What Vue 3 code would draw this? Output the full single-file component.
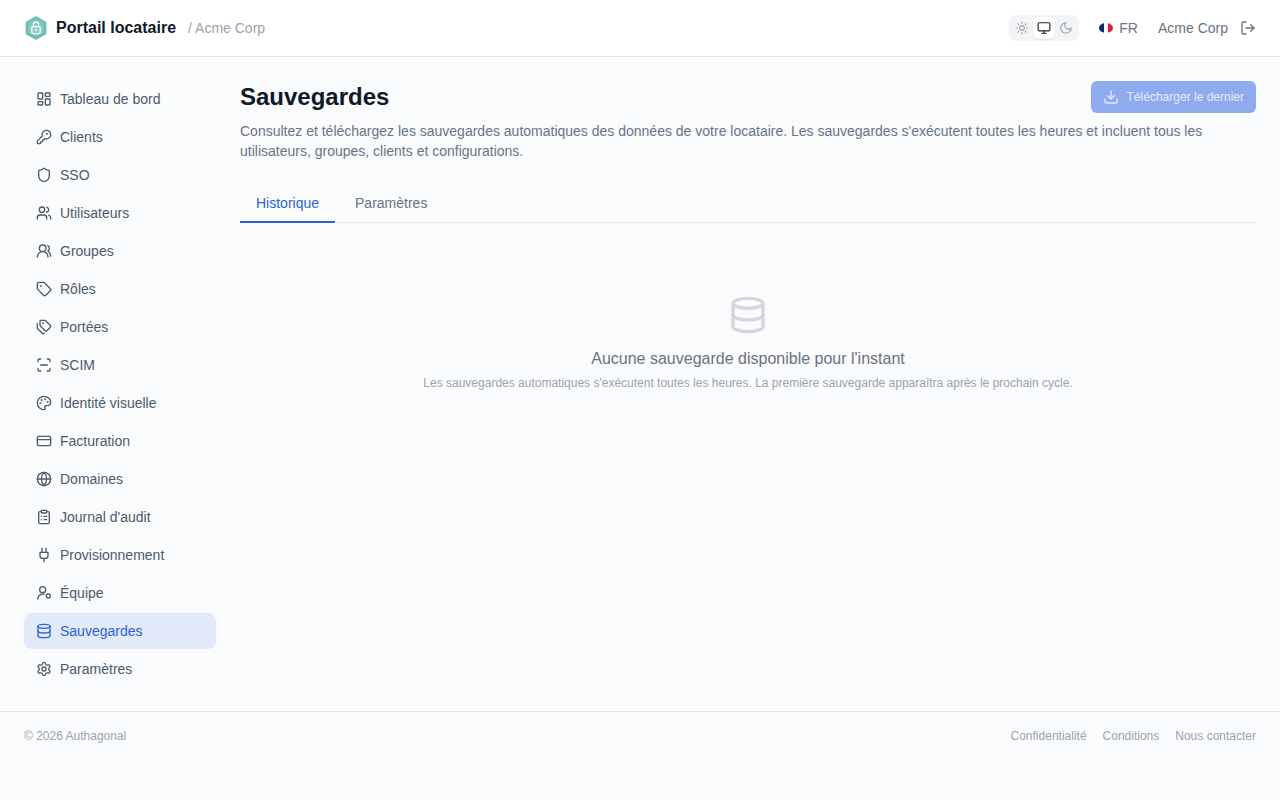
<script setup>
const paths = {
  dashboard: '<rect x="3" y="3" width="7" height="9" rx="1"/><rect x="14" y="3" width="7" height="5" rx="1"/><rect x="14" y="12" width="7" height="9" rx="1"/><rect x="3" y="16" width="7" height="5" rx="1"/>',
  key: '<path d="M2.586 17.414A2 2 0 0 0 2 18.828V21a1 1 0 0 0 1 1h3a1 1 0 0 0 1-1v-1a1 1 0 0 1 1-1h1a1 1 0 0 0 1-1v-1a1 1 0 0 1 1-1h.172a2 2 0 0 0 1.414-.586l.814-.814a6.5 6.5 0 1 0-4-4z"/><circle cx="16.5" cy="7.5" r=".5" fill="currentColor"/>',
  shield: '<path d="M20 13c0 5-3.5 7.5-7.66 8.95a1 1 0 0 1-.67-.01C7.5 20.5 4 18 4 13V6a1 1 0 0 1 1-1c2 0 4.5-1.2 6.24-2.72a1.17 1.17 0 0 1 1.52 0C14.51 3.81 17 5 19 5a1 1 0 0 1 1 1z"/>',
  users: '<path d="M16 21v-2a4 4 0 0 0-4-4H6a4 4 0 0 0-4 4v2"/><circle cx="9" cy="7" r="4"/><path d="M22 21v-2a4 4 0 0 0-3-3.87"/><path d="M16 3.13a4 4 0 0 1 0 7.75"/>',
  usersRound: '<path d="M18 21a8 8 0 0 0-16 0"/><circle cx="10" cy="8" r="5"/><path d="M22 20c0-3.37-2-6.5-4-8a5 5 0 0 0-.45-8.3"/>',
  tag: '<path d="M12.586 2.586A2 2 0 0 0 11.172 2H4a2 2 0 0 0-2 2v7.172a2 2 0 0 0 .586 1.414l8.704 8.704a2.426 2.426 0 0 0 3.42 0l6.58-6.58a2.426 2.426 0 0 0 0-3.42z"/><circle cx="7.5" cy="7.5" r=".5" fill="currentColor"/>',
  tags: '<path d="M13.172 2a2 2 0 0 1 1.414.586l6.71 6.71a2.4 2.4 0 0 1 0 3.408l-4.592 4.592a2.4 2.4 0 0 1-3.408 0l-6.71-6.71A2 2 0 0 1 6 9.172V3a1 1 0 0 1 1-1z"/><path d="M2 7v6.172a2 2 0 0 0 .586 1.414l6.71 6.71a2.4 2.4 0 0 0 3.19.19"/><circle cx="10.5" cy="6.5" r=".5" fill="currentColor"/>',
  scan: '<path d="M3 7V5a2 2 0 0 1 2-2h2"/><path d="M17 3h2a2 2 0 0 1 2 2v2"/><path d="M21 17v2a2 2 0 0 1-2 2h-2"/><path d="M7 21H5a2 2 0 0 1-2-2v-2"/><path d="M7 12h10"/>',
  palette: '<path d="M12 22a1 1 0 0 1 0-20 10 9 0 0 1 10 9 5 5 0 0 1-5 5h-2.25a1.75 1.75 0 0 0-1.4 2.8l.3.4a1.75 1.75 0 0 1-1.4 2.8z"/><circle cx="13.5" cy="6.5" r=".5" fill="currentColor"/><circle cx="17.5" cy="10.5" r=".5" fill="currentColor"/><circle cx="6.5" cy="12.5" r=".5" fill="currentColor"/><circle cx="8.5" cy="7.5" r=".5" fill="currentColor"/>',
  card: '<rect x="2" y="5" width="20" height="14" rx="2"/><line x1="2" y1="10" x2="22" y2="10"/>',
  globe: '<circle cx="12" cy="12" r="10"/><path d="M12 2a14.5 14.5 0 0 0 0 20 14.5 14.5 0 0 0 0-20"/><path d="M2 12h20"/>',
  clipboard: '<rect x="8" y="2" width="8" height="4" rx="1"/><path d="M16 4h2a2 2 0 0 1 2 2v14a2 2 0 0 1-2 2H6a2 2 0 0 1-2-2V6a2 2 0 0 1 2-2h2"/><path d="M12 11h4"/><path d="M12 16h4"/><path d="M8 11h.01"/><path d="M8 16h.01"/>',
  plug: '<path d="M12 22v-5"/><path d="M9 8V2"/><path d="M15 8V2"/><path d="M18 8v5a4 4 0 0 1-4 4h-4a4 4 0 0 1-4-4V8Z"/>',
  userCog: '<circle cx="10" cy="7" r="4.5"/><path d="M2.5 21a7.8 7.8 0 0 1 9.5-7.2"/><circle cx="18.5" cy="16.5" r="3"/>',
  database: '<ellipse cx="12" cy="5" rx="9" ry="3"/><path d="M3 5V19A9 3 0 0 0 21 19V5"/><path d="M3 12A9 3 0 0 0 21 12"/>',
  settings: '<path d="M9.671 4.136a2.34 2.34 0 0 1 4.659 0 2.34 2.34 0 0 0 3.319 1.915 2.34 2.34 0 0 1 2.33 4.033 2.34 2.34 0 0 0 0 3.831 2.34 2.34 0 0 1-2.33 4.033 2.34 2.34 0 0 0-3.319 1.915 2.34 2.34 0 0 1-4.659 0 2.34 2.34 0 0 0-3.32-1.915 2.34 2.34 0 0 1-2.33-4.033 2.34 2.34 0 0 0 0-3.831A2.34 2.34 0 0 1 6.35 6.051a2.34 2.34 0 0 0 3.319-1.915"/><circle cx="12" cy="12" r="3"/>',
  sun: '<circle cx="12" cy="12" r="4"/><path d="M12 2v2"/><path d="M12 20v2"/><path d="m4.93 4.93 1.41 1.41"/><path d="m17.66 17.66 1.41 1.41"/><path d="M2 12h2"/><path d="M20 12h2"/><path d="m6.34 17.66-1.41 1.41"/><path d="m19.07 4.93-1.41 1.41"/>',
  monitor: '<rect x="2" y="3" width="20" height="14" rx="2"/><path d="M8 21h8"/><path d="M12 17v4"/>',
  moon: '<path d="M12 3a6 6 0 0 0 9 9 9 9 0 1 1-9-9Z"/>',
  logout: '<path d="m16 17 5-5-5-5"/><path d="M21 12H9"/><path d="M9 21H5a2 2 0 0 1-2-2V5a2 2 0 0 1 2-2h4"/>',
  download: '<path d="M12 15V3"/><path d="M21 15v4a2 2 0 0 1-2 2H5a2 2 0 0 1-2-2v-4"/><path d="m7 10 5 5 5-5"/>'
}

const nav = [
  { label: 'Tableau de bord', icon: 'dashboard' },
  { label: 'Clients', icon: 'key' },
  { label: 'SSO', icon: 'shield' },
  { label: 'Utilisateurs', icon: 'users' },
  { label: 'Groupes', icon: 'usersRound' },
  { label: 'Rôles', icon: 'tag' },
  { label: 'Portées', icon: 'tags' },
  { label: 'SCIM', icon: 'scan' },
  { label: 'Identité visuelle', icon: 'palette' },
  { label: 'Facturation', icon: 'card' },
  { label: 'Domaines', icon: 'globe' },
  { label: "Journal d'audit", icon: 'clipboard' },
  { label: 'Provisionnement', icon: 'plug' },
  { label: 'Équipe', icon: 'userCog' },
  { label: 'Sauvegardes', icon: 'database', active: true },
  { label: 'Paramètres', icon: 'settings' }
]

const footerLinks = ['Confidentialité', 'Conditions', 'Nous contacter']
</script>

<template>
  <div class="page">
    <header class="topbar">
      <div class="brand">
        <svg class="logo" viewBox="0 0 22 24">
          <path d="M11 0 21.4 6v12L11 24 .6 18V6z" fill="#6fbfb3"/>
          <path d="M11 3.5 18.4 7.8v8.4L11 20.5 3.6 16.2V7.8z" fill="#86cbc0"/>
          <rect x="6.8" y="10.6" width="8.4" height="7" rx="1.4" fill="none" stroke="#fff" stroke-width="1.3"/>
          <path d="M8.4 10.6V8.6a2.6 2.6 0 0 1 5.2 0v2" fill="none" stroke="#fff" stroke-width="1.3"/>
          <circle cx="11" cy="14.1" r="1.1" fill="#fff"/>
        </svg>
        <span class="brand-name">Portail locataire</span>
        <span class="brand-tenant">/ Acme Corp</span>
      </div>
      <div class="top-actions">
        <div class="theme-switch">
          <button class="theme-btn"><svg class="icon" viewBox="0 0 24 24" v-html="paths.sun"/></button>
          <button class="theme-btn current"><svg class="icon" viewBox="0 0 24 24" v-html="paths.monitor"/></button>
          <button class="theme-btn"><svg class="icon" viewBox="0 0 24 24" v-html="paths.moon"/></button>
        </div>
        <div class="lang">
          <svg class="flag" viewBox="0 0 14 10">
            <defs><clipPath id="flag-shape"><ellipse cx="7" cy="5" rx="7" ry="5"/></clipPath></defs>
            <g clip-path="url(#flag-shape)">
              <rect width="5" height="10" fill="#0b2a6e"/>
              <rect x="5" width="4" height="10" fill="#fff"/>
              <rect x="9" width="5" height="10" fill="#d8213b"/>
            </g>
          </svg>
          <span>FR</span>
        </div>
        <span class="tenant">Acme Corp</span>
        <svg class="icon logout" viewBox="0 0 24 24" v-html="paths.logout"/>
      </div>
    </header>

    <div class="body">
      <nav class="sidebar">
        <a v-for="item in nav" :key="item.label" class="nav-item" :class="{ active: item.active }">
          <svg class="icon" viewBox="0 0 24 24" v-html="paths[item.icon]"/>
          <span>{{ item.label }}</span>
        </a>
      </nav>

      <main class="content">
        <div class="head">
          <h1>Sauvegardes</h1>
          <button class="download">
            <svg class="icon" viewBox="0 0 24 24" v-html="paths.download"/>
            Télécharger le dernier
          </button>
        </div>
        <p class="desc">Consultez et téléchargez les sauvegardes automatiques des données de votre locataire. Les sauvegardes s'exécutent toutes les heures et incluent tous les utilisateurs, groupes, clients et configurations.</p>

        <div class="tabs">
          <a class="tab active">Historique</a>
          <a class="tab">Paramètres</a>
        </div>

        <div class="empty">
          <svg class="empty-icon" viewBox="0 0 24 24" v-html="paths.database"/>
          <div class="empty-title">Aucune sauvegarde disponible pour l'instant</div>
          <div class="empty-text">Les sauvegardes automatiques s'exécutent toutes les heures. La première sauvegarde apparaîtra après le prochain cycle.</div>
        </div>
      </main>
    </div>

    <footer class="footer">
      <span>© 2026 Authagonal</span>
      <div class="footer-links">
        <a v-for="link in footerLinks" :key="link">{{ link }}</a>
      </div>
    </footer>
  </div>
</template>

<style>
html, body {
  background: #f9fafb;
}
</style>

<style scoped>
.page {
  min-height: 800px;
  background: #f9fbfd;
  font-family: "Liberation Sans", Arial, sans-serif;
  color: #4b5563;
}

.icon {
  width: 16px;
  height: 16px;
  flex: none;
  fill: none;
  stroke: currentColor;
  stroke-width: 2;
  stroke-linecap: round;
  stroke-linejoin: round;
}

/* top bar */
.topbar {
  height: 56px;
  padding: 0 24px;
  background: #fff;
  border-bottom: 1px solid #e5e7eb;
  display: flex;
  align-items: center;
  justify-content: space-between;
}

.brand {
  display: flex;
  align-items: center;
}

.logo {
  width: 22px;
  height: 24px;
  margin: 0 9px 0 1px;
}

.brand-name {
  font-size: 16px;
  font-weight: 700;
  color: #111827;
}

.brand-tenant {
  margin-left: 12px;
  font-size: 14px;
  color: #9ca3af;
}

.top-actions {
  display: flex;
  align-items: center;
  font-size: 14px;
  color: #6b7280;
}

.theme-switch {
  display: flex;
  padding: 2px;
  border-radius: 8px;
  background: #f3f4f6;
}

.theme-btn {
  width: 22px;
  height: 22px;
  padding: 0;
  border: 0;
  border-radius: 6px;
  background: transparent;
  color: #9ca3af;
  display: flex;
  align-items: center;
  justify-content: center;
}

.theme-btn .icon {
  width: 14px;
  height: 14px;
}

.theme-btn.current {
  background: #fff;
  color: #1f2937;
  box-shadow: 0 1px 2px rgba(0, 0, 0, 0.08);
}

.lang {
  margin-left: 20px;
  display: flex;
  align-items: center;
  gap: 6px;
}

.flag {
  width: 14px;
  height: 10px;
}

.tenant {
  margin-left: 20px;
}

.logout {
  margin-left: 12px;
}

/* layout */
.body {
  display: flex;
}

.sidebar {
  width: 192px;
  flex: none;
  padding: 24px;
  display: flex;
  flex-direction: column;
  gap: 2px;
}

.nav-item {
  height: 36px;
  padding: 0 12px;
  border-radius: 8px;
  display: flex;
  align-items: center;
  gap: 8px;
  font-size: 14px;
  color: #4f5a6b;
}

.nav-item.active {
  background: #e2e9f9;
  color: #2a63d4;
}

.content {
  flex: 1;
  min-width: 0;
  padding: 24px 24px 24px 0;
}

.head {
  display: flex;
  align-items: center;
  justify-content: space-between;
}

h1 {
  margin: 0;
  font-size: 24px;
  line-height: 32px;
  font-weight: 700;
  color: #111827;
}

.download {
  height: 32px;
  padding: 0 12px;
  border: 0;
  border-radius: 6px;
  background: #8fabf0;
  color: #e4ebfd;
  font-family: inherit;
  font-size: 12px;
  display: flex;
  align-items: center;
  gap: 8px;
}

.desc {
  margin: 8px 0 0;
  font-size: 14px;
  line-height: 20px;
  color: #6b7484;
}

.tabs {
  margin-top: 24px;
  display: flex;
  gap: 4px;
  border-bottom: 1px solid #e5e7eb;
}

.tab {
  padding: 8px 16px;
  font-size: 14px;
  line-height: 20px;
  color: #6b7280;
  border-bottom: 2px solid transparent;
  margin-bottom: -1px;
}

.tab.active {
  color: #2a63d4;
  border-bottom-color: #2a63cc;
}

.empty {
  padding-top: 72px;
  display: flex;
  flex-direction: column;
  align-items: center;
}

.empty-icon {
  width: 40px;
  height: 40px;
  fill: none;
  stroke: #d5d7db;
  stroke-width: 2;
  stroke-linecap: round;
  stroke-linejoin: round;
}

.empty-title {
  margin-top: 12px;
  font-size: 16px;
  line-height: 24px;
  color: #6b7280;
}

.empty-text {
  margin-top: 4px;
  font-size: 12px;
  line-height: 16px;
  color: #9ca3af;
}

/* footer */
.footer {
  height: 48px;
  padding: 0 24px;
  border-top: 1px solid #e5e7eb;
  display: flex;
  align-items: center;
  justify-content: space-between;
  font-size: 12px;
  color: #9ca3af;
}

.footer-links {
  display: flex;
  gap: 16px;
}
</style>
